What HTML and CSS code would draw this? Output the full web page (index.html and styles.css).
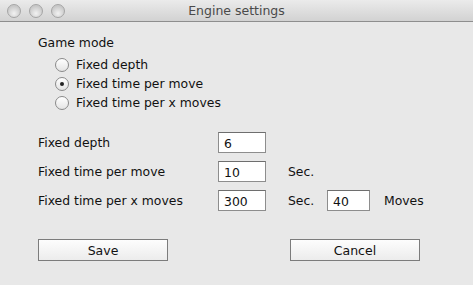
FILE: index.html
```html
<!DOCTYPE html>
<html lang="en">
<head>
    <meta charset="UTF-8">
    <title>Engine settings</title>
    <link rel="stylesheet" href="styles.css">
</head>
<body>
    <div class="window">
        <div class="titlebar">
            <div class="lights">
                <span class="light"></span>
                <span class="light"></span>
                <span class="light"></span>
            </div>
            <div class="title">Engine settings</div>
        </div>

        <div class="content">
            <div class="group-title">Game mode</div>
            <div class="radios">
                <div class="radio-row"><span class="radio"></span>Fixed depth</div>
                <div class="radio-row"><span class="radio checked"></span>Fixed time per move</div>
                <div class="radio-row"><span class="radio"></span>Fixed time per x moves</div>
            </div>

            <div class="form">
                <div class="row">
                    <span class="label">Fixed depth</span>
                    <input type="text" class="field" value="6">
                </div>
                <div class="row">
                    <span class="label">Fixed time per move</span>
                    <input type="text" class="field" value="10">
                    <span class="unit">Sec.</span>
                </div>
                <div class="row">
                    <span class="label">Fixed time per x moves</span>
                    <input type="text" class="field" value="300">
                    <span class="unit">Sec.</span>
                    <input type="text" class="field small" value="40">
                    <span class="unit moves">Moves</span>
                </div>
            </div>

            <div class="buttons">
                <button class="btn">Save</button>
                <button class="btn">Cancel</button>
            </div>
        </div>
    </div>
</body>
</html>
```

FILE: styles.css
```css
body {
    margin: 0;
    padding: 0;
    background-color: #e8e8e8;
    font-family: "DejaVu Sans", Verdana, sans-serif;
    font-size: 12.4px;
    color: #111;
}

.window {
    width: 473px;
    height: 285px;
    background-color: #e8e8e8;
    overflow: hidden;
}

.titlebar {
    height: 21px;
    border-bottom: 1px solid #8e8e8e;
    background: linear-gradient(#ebebeb, #d2d2d2);
    display: flex;
    align-items: center;
    position: relative;
}

.lights {
    display: flex;
    gap: 8px;
    padding-left: 7px;
}

.light {
    width: 12px;
    height: 12px;
    border-radius: 50%;
    border: 1px solid #a5a5a5;
    background: radial-gradient(circle at 50% 70%, #f2f2f2, #c8c8c8 70%);
}

.title {
    position: absolute;
    left: 0;
    right: 0;
    text-align: center;
    font-size: 12.5px;
    color: #4a4a4a;
}

.content {
    padding: 13px 0 0 38px;
}

.group-title {
    height: 18px;
}

.radios {
    padding: 2px 0 0 17px;
}

.radio-row {
    display: flex;
    align-items: center;
    height: 19px;
    gap: 7px;
}

.radio {
    width: 12px;
    height: 12px;
    border-radius: 50%;
    border: 1px solid #8a8a8a;
    background: linear-gradient(#ffffff, #e4e4e4);
    display: flex;
    align-items: center;
    justify-content: center;
}

.radio.checked::after {
    content: "";
    width: 4px;
    height: 4px;
    border-radius: 50%;
    background-color: #222;
}

.form {
    margin-top: 20px;
    display: flex;
    flex-direction: column;
    gap: 8px;
}

.row {
    display: flex;
    align-items: center;
    height: 21px;
}

.label {
    width: 180px;
}

.field {
    width: 48px;
    height: 21px;
    box-sizing: border-box;
    border: 1px solid #8d8d8d;
    border-top-color: #6e6e6e;
    background: #fff;
    font-family: inherit;
    font-size: 12.4px;
    color: #111;
    padding: 2px 5px 0;
    margin: 0;
}

.field.small {
    width: 43px;
}

.unit {
    margin-left: 22px;
    width: 39px;
}

.unit.moves {
    margin-left: 14px;
}

.buttons {
    margin-top: 28px;
    display: flex;
    gap: 122px;
}

.btn {
    width: 130px;
    height: 22px;
    border: 1px solid #7c7c7c;
    background: linear-gradient(#fdfdfd, #ececec);
    font-family: inherit;
    font-size: 12.5px;
    padding: 0;
    color: #111;
}
```
